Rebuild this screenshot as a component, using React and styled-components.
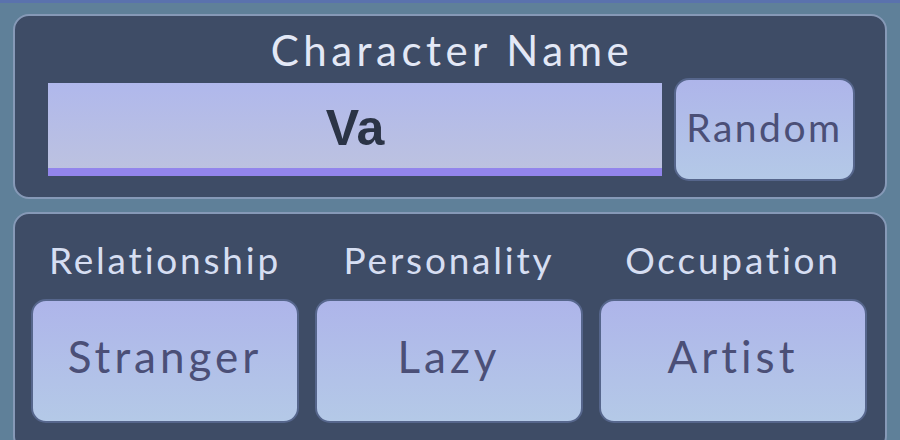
import React from "react";
import styled, { createGlobalStyle } from "styled-components";

const GlobalStyle = createGlobalStyle`
  html, body {
    margin: 0;
    padding: 0;
  }
  body {
    width: 900px;
    height: 440px;
    overflow: hidden;
    background: #5f8099;
    font-family: Lato, "Noto Sans", sans-serif;
  }
`;

const Screen = styled.div`
  width: 900px;
  height: 440px;
  box-sizing: border-box;
  border-top: 3px solid #5a72ad;
  padding: 11px 13px 0 13px;
  display: flex;
  flex-direction: column;
  gap: 13px;
`;

const Panel = styled.section`
  box-sizing: border-box;
  height: ${({ $height }) => $height}px;
  flex-shrink: 0;
  background: #3e4c66;
  border: 2px solid #8699b7;
  border-radius: 16px;
  padding: ${({ $pad }) => $pad};
`;

const Title = styled.h1`
  margin: 0;
  text-align: center;
  font-weight: 400;
  font-size: 42px;
  line-height: 44px;
  letter-spacing: 4.5px;
  color: #e3e8f6;
`;

const NameRow = styled.div`
  display: flex;
  align-items: center;
  gap: 12px;
  margin-top: 6px;
`;

const NameField = styled.div`
  box-sizing: border-box;
  width: 614px;
  height: 93px;
  display: flex;
  align-items: center;
  justify-content: center;
  background: linear-gradient(#b0b8ec, #bcc2e0);
  border-bottom: 8px solid #9285ec;
  font-family: "Liberation Sans", Arial, sans-serif;
  font-weight: 700;
  font-size: 50px;
  color: #2b3446;
  padding-top: 4px;
`;

const Button = styled.button`
  box-sizing: border-box;
  width: ${({ $w }) => $w}px;
  height: ${({ $h }) => $h}px;
  border: 2px solid #56668c;
  border-radius: 15px;
  background: linear-gradient(#aeb5ea, #b4c9e7);
  color: #4b4f77;
  font-family: Lato, "Noto Sans", sans-serif;
  font-size: ${({ $size }) => $size}px;
  letter-spacing: ${({ $spacing }) => $spacing}px;
  padding: 0 0 ${({ $lift }) => $lift}px 0;
  cursor: pointer;
`;

const TraitGrid = styled.div`
  display: grid;
  grid-template-columns: repeat(3, 268px);
  column-gap: 16px;
  row-gap: 17px;
`;

const TraitLabel = styled.div`
  text-align: center;
  font-size: 37px;
  line-height: 44px;
  letter-spacing: 2.8px;
  color: #d6def2;
`;

const traits = [
  { label: "Relationship", value: "Stranger" },
  { label: "Personality", value: "Lazy" },
  { label: "Occupation", value: "Artist" },
];

export default function App() {
  return (
    <>
      <GlobalStyle />
      <Screen>
        <Panel $height={185} $pad="12px 29px 0 33px">
          <Title>Character Name</Title>
          <NameRow>
            <NameField>Va</NameField>
            <Button $w={181} $h={103} $size={39} $spacing={2.5} $lift={6}>
              Random
            </Button>
          </NameRow>
        </Panel>
        <Panel $height={240} $pad="24px 17px 0 16px">
          <TraitGrid>
            {traits.map((t) => (
              <TraitLabel key={t.label}>{t.label}</TraitLabel>
            ))}
            {traits.map((t) => (
              <Button
                key={t.value}
                $w={268}
                $h={124}
                $size={44}
                $spacing={4}
                $lift={10}
              >
                {t.value}
              </Button>
            ))}
          </TraitGrid>
        </Panel>
      </Screen>
    </>
  );
}
